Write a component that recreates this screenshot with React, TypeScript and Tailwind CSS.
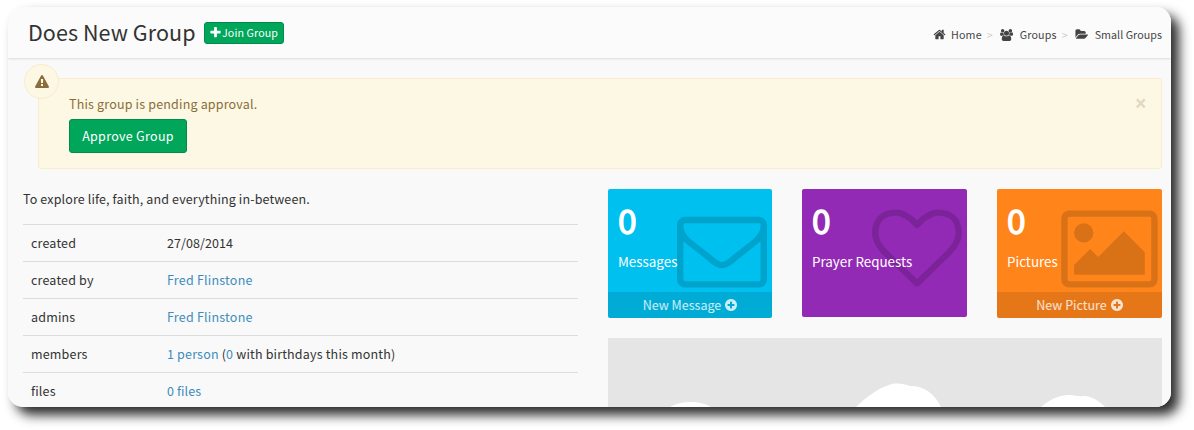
import type { ReactNode } from 'react';

const paths = {
  envelope: { w: 1792, d: 'M1664 1504v-768q-32 36-69 66-268 206-426 338-51 43-83 67t-86.5 48.5-102.5 24.5h-2q-48 0-102.5-24.5t-86.5-48.5-83-67q-158-132-426-338-37-30-69-66v768q0 13 9.5 22.5t22.5 9.5h1472q13 0 22.5-9.5t9.5-22.5zm0-1051v-24.5l-.5-13-3-12.5-5.5-9-9-7.5-14-2.5h-1472q-13 0-22.5 9.5t-9.5 22.5q0 168 147 284 193 152 401 317 6 5 35 29.5t46 37.5 44.5 31.5 50.5 27.5 43 9h2q20 0 43-9t50.5-27.5 44.5-31.5 46-37.5 35-29.5q208-165 401-317 54-43 100.5-115.5t46.5-131.5zm128-37v1088q0 66-47 113t-113 47h-1472q-66 0-113-47t-47-113v-1088q0-66 47-113t113-47h1472q66 0 113 47t47 113z' },
  heart: { w: 1792, d: 'M1664 596q0-81-21.5-143t-55-98.5-81.5-59.5-94-31-98-8-112 25.5-110.5 64-86.5 72-60 61.5q-18 22-49 22t-49-22q-24-28-60-61.5t-86.5-72-110.5-64-112-25.5-98 8-94 31-81.5 59.5-55 98.5-21.5 143q0 168 187 355l581 560 580-559q188-188 188-356zm128 0q0 221-229 450l-623 600q-18 18-44 18t-44-18l-624-602q-10-8-27.5-26t-55.5-65.5-68-97.5-53.5-121-23.5-138q0-220 127-344t351-124q62 0 126.5 21.5t120 58 95.5 68.5 76 68q36-36 76-68t95.5-68.5 120-58 126.5-21.5q224 0 351 124t127 344z' },
  picture: { w: 1984, d: 'M704 576q0 80-56 136t-136 56-136-56-56-136 56-136 136-56 136 56 56 136zm1024 384v448h-1408v-192l320-320 160 160 512-512zm96-704h-1600q-13 0-22.5 9.5t-9.5 22.5v1216q0 13 9.5 22.5t22.5 9.5h1600q13 0 22.5-9.5t9.5-22.5v-1216q0-13-9.5-22.5t-22.5-9.5zm160 32v1216q0 66-47 113t-113 47h-1600q-66 0-113-47t-47-113v-1216q0-66 47-113t113-47h1600q66 0 113 47t47 113z' },
  home: { w: 1792, d: 'M1472 992v480q0 26-19 45t-45 19h-384v-384h-256v384h-384q-26 0-45-19t-19-45v-480q0-1 .5-3t.5-3l575-474 575 474q1 2 1 6zm223-69l-62 74q-8 9-21 11h-3q-13 0-21-7l-692-577-692 577q-12 8-24 7-13-2-21-11l-62-74q-8-10-7-23.5t11-21.5l719-599q32-26 76-26t76 26l244 204v-195q0-14 9-23t23-9h192q14 0 23 9t9 23v408l219 182q10 8 11 21.5t-7 23.5z' },
  warning: { w: 1792, d: 'M1024 1375v-190q0-14-9.5-23.5t-22.5-9.5h-192q-13 0-22.5 9.5t-9.5 23.5v190q0 14 9.5 23.5t22.5 9.5h192q13 0 22.5-9.5t9.5-23.5zm-2-374l18-459q0-12-10-19-13-11-24-11h-220q-11 0-24 11-10 7-10 21l17 457q0 10 10 16.5t24 6.5h185q14 0 23.5-6.5t10.5-16.5zm-14-934l768 1408q35 63-2 126-17 29-46.5 46t-63.5 17h-1536q-34 0-63.5-17t-46.5-46q-37-63-2-126l768-1408q17-31 47-49t65-18 65 18 47 49z' },
  plus: { w: 1792, d: 'M1600 736v192q0 40-28 68t-68 28h-416v416q0 40-28 68t-68 28h-192q-40 0-68-28t-28-68v-416h-416q-40 0-68-28t-28-68v-192q0-40 28-68t68-28h416v-416q0-40 28-68t68-28h192q40 0 68 28t28 68v416h416q40 0 68 28t28 68z' },
  plusCircle: { w: 1792, d: 'M1344 960v-128q0-26-19-45t-45-19h-256v-256q0-26-19-45t-45-19h-128q-26 0-45 19t-19 45v256h-256q-26 0-45 19t-19 45v128q0 26 19 45t45 19h256v256q0 26 19 45t45 19h128q26 0 45-19t19-45v-256h256q26 0 45-19t19-45zm320-64q0 209-103 385.5t-279.5 279.5-385.5 103-385.5-103-279.5-279.5-103-385.5 103-385.5 279.5-279.5 385.5-103 385.5 103 279.5 279.5 103 385.5z' },
  users: { w: 1920, d: 'M593 896q-162 5-265 128h-134q-82 0-138-40.5t-56-118.5q0-353 124-353 6 0 43.5 21t97.5 42.5 119 21.5q67 0 133-23-5 37-5 66 0 159 93 290zm1071 637q0 120-73 189.5t-194 69.5h-874q-121 0-194-69.5t-73-189.5q0-53 3.5-103.5t14-109 26.5-108.5 43-97.5 62-81 85.5-53.5 111.5-20q10 0 43 21.5t73 48 107 48 135 21.5 135-21.5 107-48 73-48 43-21.5q61 0 111.5 20t85.5 53.5 62 81 43 97.5 26.5 108.5 14 109 3.5 103.5zm-1024-1277q0 106-75 181t-181 75-181-75-75-181 75-181 181-75 181 75 75 181zm704 384q0 159-112.5 271.5t-271.5 112.5-271.5-112.5-112.5-271.5 112.5-271.5 271.5-112.5 271.5 112.5 112.5 271.5zm576 225q0 78-56 118.5t-138 40.5h-134q-103-123-265-128 93-131 93-290 0-29-5-66 66 23 133 23 59 0 119-21.5t97.5-42.5 43.5-21q124 0 124 353zm-128-609q0 106-75 181t-181 75-181-75-75-181 75-181 181-75 181 75 75 181z' },
  folder: { w: 1943, d: 'M1943 952q0 31-31 66l-336 396q-43 51-120.5 86.5t-143.5 35.5h-1088q-34 0-60.5-13t-26.5-43q0-31 31-66l336-396q43-51 120.5-86.5t143.5-35.5h1088q34 0 60.5 13t26.5 43zm-343-344v160h-832q-94 0-197 47.5t-164 119.5l-337 396-5 6q0-4-.5-12.5t-.5-12.5v-960q0-92 66-158t158-66h320q92 0 158 66t66 158v32h544q92 0 158 66t66 158z' },
};

function Icon({ name, className }: { name: keyof typeof paths; className?: string }) {
  const p = paths[name];
  return (
    <svg viewBox={`0 0 ${p.w} 1792`} className={className} fill="currentColor" aria-hidden="true">
      <path d={p.d} />
    </svg>
  );
}

function Row({ label, children }: { label: string; children: ReactNode }) {
  return (
    <div className="flex h-[37px] items-center border-t border-[#ddd] pl-2">
      <div className="w-[136px]">{label}</div>
      <div>{children}</div>
    </div>
  );
}

function StatBox({ color, label, icon, iconClass, action }: {
  color: string; label: string; icon: keyof typeof paths; iconClass: string; action?: string;
}) {
  return (
    <div className={`relative flex min-w-0 flex-col overflow-hidden rounded-xs tracking-normal text-white ${color}`}>
      <div className="relative z-10 h-[103px] pt-3 pl-[10px]">
        <div className="h-[38px] text-[33.5px] leading-[38px] [-webkit-text-stroke:1.3px_white]">0</div>
        <div className="mt-3 text-[13.4px] leading-[21px]">{label}</div>
      </div>
      <Icon name={icon} className={`absolute h-[90px] text-black/15 ${iconClass}`} />
      {action && (
        <div className="relative z-10 flex h-[26px] items-center justify-center gap-[3px] bg-black/10 pl-px text-[12.5px] text-white/80">
          <span>{action}</span>
          <Icon name="plusCircle" className="size-[14px]" />
        </div>
      )}
    </div>
  );
}

const link = 'text-[#3c8dbc]';

export default function App() {
  return (
    <div className="h-[430px] w-[1194px] overflow-hidden bg-white pt-[7px] pl-2 font-['Noto_Sans_CJK_SC',sans-serif] text-[12.5px] leading-5 tracking-[0.18px] text-[#333]">
      <div className="h-[400px] w-[1163px] rounded-[15px] shadow-[8px_8px_12px_rgba(0,0,0,0.83)]">
        <div className="flex h-full flex-col overflow-hidden rounded-[15px] bg-[#f9f9f9]">
          <header className="flex h-[51px] shrink-0 items-center bg-[#fbfbfb] pr-[9px] pl-5 shadow-[0_1px_2px_rgba(0,0,0,0.12)]">
            <h1 className="-mt-0.5 text-[21.5px] leading-6 tracking-[0.07px]">Does New Group</h1>
            <button className="ml-2 flex h-[22px] w-20 items-center justify-center rounded-[3px] border border-[#008d4c] bg-[#00a65a] text-[10.7px] tracking-[0.1px] text-white">
              <Icon name="plus" className="size-[13px]" />
              <span>Join Group</span>
            </button>
            <nav className="mt-1 ml-auto flex items-center text-[10.7px] tracking-[0.05px] text-[#444]">
              <Icon name="home" className="h-[13px] w-[13px]" />
              <span className="ml-[5px] tracking-[0.2px]">Home</span>
              <span className="mr-[7px] ml-[5px] text-[#ccc]">&gt;</span>
              <Icon name="users" className="h-3 w-[13px]" />
              <span className="ml-[7px] tracking-[0.15px]">Groups</span>
              <span className="mr-[7px] ml-[5px] text-[#ccc]">&gt;</span>
              <Icon name="folder" className="h-[13px] w-[13px]" />
              <span className="ml-[7px]">Small Groups</span>
            </nav>
          </header>
          <section className="relative mt-5 mr-[9px] ml-[30px] h-[91px] shrink-0 rounded-[3px] border border-[#faebcc] bg-[#fcf8e3] pt-[15px] pl-[30px] text-[#8a6d3b]">
            <div className="absolute -top-[15px] -left-[15px] flex size-[35px] items-center justify-center rounded-full border border-[#faebcc] bg-[#fcf8e3]">
              <Icon name="warning" className="size-[14px]" />
            </div>
            <span className="absolute top-[14px] right-[14px] font-['Open_Sans',sans-serif] text-[21px] font-bold text-[#e0d9bf]">×</span>
            <p>This group is pending approval.</p>
            <button className="mt-[5px] flex h-[34px] w-[118px] items-center justify-center rounded-[3px] border border-[#008d4c] bg-[#00a65a] tracking-[0.3px] text-white">
              Approve Group
            </button>
          </section>
          <main className="mt-5 flex gap-[30px] pr-[9px] pl-[15px]">
            <div className="w-[555px]">
              <p className="mb-[15px] tracking-[0.13px]">To explore life, faith, and everything in-between.</p>
              <Row label="created"><span className="tracking-[0.08px]">27/08/2014</span></Row>
              <Row label="created by"><a className={`${link} tracking-[0.22px]`}>Fred Flinstone</a></Row>
              <Row label="admins"><a className={`${link} tracking-[0.22px]`}>Fred Flinstone</a></Row>
              <Row label="members"><a className={link}>1 person</a> (<a className={link}>0</a> with birthdays this month)</Row>
              <Row label="files"><a className={`${link} tracking-[0.08px]`}>0 files</a></Row>
            </div>
            <div className="w-[554px]">
              <div className="grid h-[129px] grid-cols-[164px_165px_165px] gap-[30px]">
                <StatBox color="bg-[#00c0ef]" label="Messages" icon="envelope" iconClass="top-[14.5px] right-[5px]" action="New Message" />
                <StatBox color="bg-[#932ab6] mb-px" label="Prayer Requests" icon="heart" iconClass="top-[14px] right-[5px]" />
                <StatBox color="bg-[#ff851b]" label="Pictures" icon="picture" iconClass="top-[14.5px] right-1" action="New Picture" />
              </div>
              <svg viewBox="0 0 554 69" className="mt-5 h-[69px] w-full bg-[#e5e5e5]" fill="#fff">
                <path d="M62 69Q71 64 82 64Q95 64 103 69Z" />
                <path d="M248 69C256 61 270 50 281 47C288 44 296 46 302 48C316 48 326 55 333 69Z" />
                <path d="M433 69C442 61 452 57 461 57C467 57 471 59 476 58C484 58 491 63 497 69Z" />
              </svg>
            </div>
          </main>
        </div>
      </div>
    </div>
  );
}
